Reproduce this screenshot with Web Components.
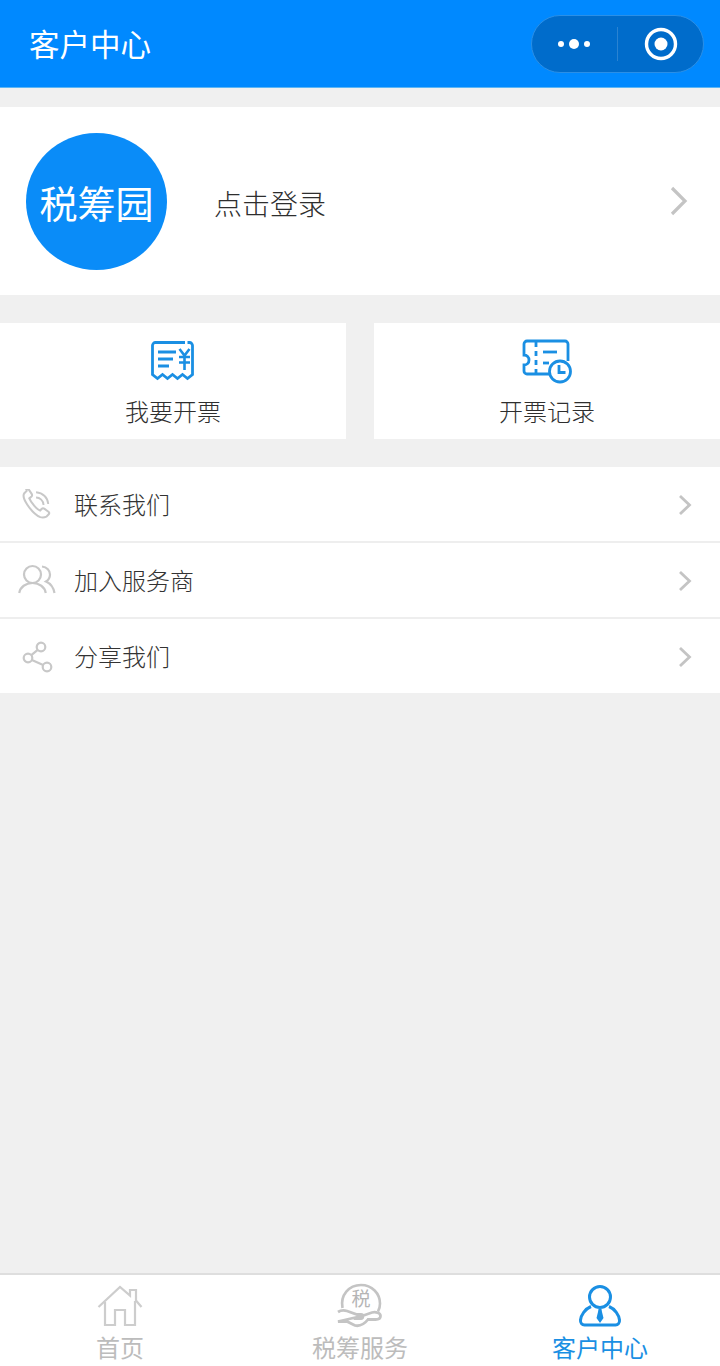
<!DOCTYPE html>
<html lang="zh">
<head>
<meta charset="utf-8">
<title>客户中心</title>
<style>
  html, body { margin: 0; padding: 0; background: #f0f0f0; }
  body {
    width: 720px;
    height: 1366px;
    overflow: hidden;
    display: flex;
    flex-direction: column;
    font-family: "Noto Sans CJK SC", "Noto Sans", sans-serif;
  }
  main { flex: 1; min-height: 0; }
</style>
</head>
<body>
<app-header title="客户中心"></app-header>
<main>
  <profile-card label="点击登录"></profile-card>
  <action-row>
    <action-card label="我要开票" icon="invoice"></action-card>
    <action-card label="开票记录" icon="record"></action-card>
  </action-row>
  <menu-list>
    <menu-item label="联系我们" icon="phone"></menu-item>
    <menu-item label="加入服务商" icon="people"></menu-item>
    <menu-item label="分享我们" icon="share"></menu-item>
  </menu-list>
</main>
<tab-bar>
  <tab-item label="首页" icon="home"></tab-item>
  <tab-item label="税筹服务" icon="tax"></tab-item>
  <tab-item label="客户中心" icon="user" active></tab-item>
</tab-bar>

<script>
const ICONS = {
  invoice: `<svg width="46" height="42" viewBox="0 0 46 42" fill="none" stroke="#1a8fe3" stroke-width="2.800">
    <path d="M35 2.500H5.500a3 3 0 0 0-3 3v29l5 4 5-4 5 4 5-4 5 4 5-4 5 4 5-4v-29a3 3 0 0 0-3-3h-2"/>
    <path d="M8 12h18M8 19h15M8 26h11"/>
    <path d="M29.500 9l5 6.500 5-6.500M29 17h11M29 22.500h11M34.500 15v15" stroke-width="2.600"/>
  </svg>`,
  record: `<svg width="50" height="46" viewBox="0 0 50 46" fill="none" stroke="#1a8fe3" stroke-width="2.800">
    <path d="M28 36H5a3 3 0 0 1-3-3v-6c3 0 5-2 5-5s-2-5-5-5V6a3 3 0 0 1 3-3h38a3 3 0 0 1 3 3v17"/>
    <path d="M14 4v5M14 13v5M14 22v5M14 31v4"/>
    <path d="M21 14h14"/>
    <path d="M21 25h6"/>
    <circle cx="38" cy="33.500" r="10.500" fill="#fff"/>
    <path d="M37 27v7.500h6.500"/>
  </svg>`,
  phone: `<svg width="30" height="30" viewBox="0 0 32 32" fill="none" stroke="#c8c8c8" stroke-width="2.200">
    <path d="M5 2L2.500 4.500c-1.500 2 -1 6 3 12s9 11.500 14 13.500c3 1 4.500 .5 6.500 -.5l2.500 -2.500c.8 -1 .6 -2 -.3 -2.800l-4.500 -3.200c-1 -.7 -2 -.5 -2.800 .3l-1.600 1.700c-3 -1 -9.500 -8 -11.500 -13l2.300 -2c.8 -.8 .8 -1.800 .2 -2.800l-3 -4.500c-.8 -1 -2 -1.200 -2.800 -.7z"/>
    <path d="M15 9c4 0 8 3.500 8 8M15 3.500c7.500 .5 12.500 6 13 12.500" stroke-width="2"/>
  </svg>`,
  people: `<svg width="38" height="32" viewBox="0 0 38 32" fill="none" stroke="#c8c8c8" stroke-width="2.200">
    <circle cx="14.500" cy="10.500" r="8.500"/>
    <path d="M1.200 29c1 -6 6.500 -10 13.300 -10s12.300 4 13.300 10"/>
    <path d="M24 2.500c5 .5 8 4 8 8c0 3 -1.500 5.500 -4 7c4.500 2 7.500 6 8.500 11.500"/>
  </svg>`,
  share: `<svg width="32" height="34" viewBox="0 0 32 34" fill="none" stroke="#c8c8c8" stroke-width="2.200">
    <circle cx="20" cy="8" r="4.300"/>
    <circle cx="7" cy="19" r="4.300"/>
    <circle cx="26" cy="28" r="4.300"/>
    <path d="M16.700 10.800L10.300 16.200M10.900 20.900l11.200 5.200"/>
  </svg>`,
  home: `<svg width="46" height="42" viewBox="0 0 46 42" fill="none" stroke="#cdcdcd" stroke-width="2.200">
    <path d="M1.500 22L23 2l10 8.500V5h6v10.500L44.500 22"/>
    <path d="M8 17v23h10V25h10v15h10V16"/>
  </svg>`,
  tax: `<svg width="48" height="46" viewBox="0 0 48 46" fill="none" stroke="#c4c4c4" stroke-width="2.600">
    <path d="M6.500 25C4 12 13 2 25 2c11 0 19 8.500 19 18.500c0 3 -.5 5.500 -2 8"/>
    <path d="M2 29c3 -2 6 -2 9 -1l10 3.500h4c2.500 0 2.500 4 0 4h-7M26 33l10 -3.500c4 -1 8.500 .5 8.500 3.500s-2.500 3.500 -5 3.500H32c-4 5 -8 7 -13 6l-8 -4H2z" stroke-width="2.800"/>
    <text x="25" y="23" text-anchor="middle" font-size="19" stroke="none" fill="#b5b5b5" font-family="'Noto Sans CJK SC', sans-serif">税</text>
  </svg>`,
  user: `<svg width="44" height="44" viewBox="0 0 44 44" fill="none" stroke="#1a8fe3" stroke-width="3">
    <circle cx="22" cy="13" r="10.500"/>
    <path d="M13 22.500C7 25 3 31 2.500 36c-.3 3 1.500 5 4 5h31c2.500 0 4.300 -2 4 -5C41 31 37 25 31 22.500"/>
    <path d="M20.500 25h3l.5 3 1.500 6-3.500 5-3.500-5 1.500-6z" fill="#1a8fe3" stroke="none"/>
  </svg>`,
};

class AppHeader extends HTMLElement {
  constructor() {
    super();
    this.attachShadow({ mode: 'open' });
  }

  connectedCallback() {
    this.shadowRoot.innerHTML = `
      <style>
        :host {
          display: flex;
          flex: none;
          align-items: center;
          justify-content: space-between;
          box-sizing: border-box;
          height: 88px;
          padding: 1px 16px 0 29px;
          background: #0089ff;
          border-bottom: 1px solid #5cb6f5;
          color: #fff;
        }
        .title { font-size: 30.500px; line-height: 40px; margin-top: -2px; }
        .capsule {
          display: flex;
          align-items: center;
          box-sizing: border-box;
          width: 173px;
          height: 58px;
          border-radius: 29px;
          background: #006ccb;
          border: 1px solid #2b8fe6;
        }
        .dots {
          flex: 1;
          display: flex;
          justify-content: center;
          align-items: center;
          gap: 5px;
          margin-right: 1px;
        }
        .dots i { display: block; width: 6px; height: 6px; border-radius: 50%; background: #fff; }
        .dots i:nth-child(2) { width: 10px; height: 10px; }
        .sep { width: 1px; height: 34px; background: #2a83d2; }
        .target { flex: 1; display: flex; justify-content: center; padding-left: 2px; }
      </style>
      <div class="title">${this.getAttribute('title')}</div>
      <div class="capsule">
        <div class="dots"><i></i><i></i><i></i></div>
        <div class="sep"></div>
        <div class="target">
          <svg width="34" height="34" viewBox="0 0 34 34">
            <circle cx="17" cy="17" r="14.500" fill="none" stroke="#fff" stroke-width="3.400"/>
            <circle cx="17" cy="17" r="6.500" fill="#fff"/>
          </svg>
        </div>
      </div>
    `;
  }
}

class ProfileCard extends HTMLElement {
  constructor() {
    super();
    this.attachShadow({ mode: 'open' });
  }

  connectedCallback() {
    this.shadowRoot.innerHTML = `
      <style>
        :host {
          display: flex;
          align-items: center;
          box-sizing: border-box;
          height: 188px;
          margin-top: 19px;
          padding: 0 32px 0 26px;
          background: #fff;
        }
        .logo {
          width: 141px;
          height: 137px;
          border-radius: 50%;
          background: #0a8cf8;
          color: #fff;
          display: flex;
          align-items: center;
          justify-content: center;
          font-size: 38px;
          white-space: nowrap;
        }
        .label {
          flex: 1;
          margin-left: 47px;
          margin-top: 4px;
          font-size: 28px;
          font-weight: 300;
          color: #2e2e2e;
        }
      </style>
      <div class="logo">税筹园</div>
      <div class="label">${this.getAttribute('label')}</div>
      <svg width="18" height="30" viewBox="0 0 18 30" fill="none" stroke="#c4c4c4" stroke-width="3.200">
        <path d="M2 2l13 13L2 28"/>
      </svg>
    `;
  }
}

class ActionRow extends HTMLElement {
  constructor() {
    super();
    this.attachShadow({ mode: 'open' });
    this.shadowRoot.innerHTML = `
      <style>
        :host {
          display: grid;
          grid-template-columns: 346px 346px;
          column-gap: 28px;
          margin-top: 28px;
        }
      </style>
      <slot></slot>
    `;
  }
}

class ActionCard extends HTMLElement {
  constructor() {
    super();
    this.attachShadow({ mode: 'open' });
  }

  connectedCallback() {
    this.shadowRoot.innerHTML = `
      <style>
        :host {
          display: flex;
          flex-direction: column;
          align-items: center;
          box-sizing: border-box;
          height: 116px;
          padding-top: 15px;
          background: #fff;
        }
        .icon { height: 46px; display: flex; align-items: center; }
        .label { margin-top: 11px; font-size: 24px; font-weight: 300; line-height: 32px; color: #2e2e2e; }
      </style>
      <div class="icon">${ICONS[this.getAttribute('icon')]}</div>
      <div class="label">${this.getAttribute('label')}</div>
    `;
  }
}

class MenuList extends HTMLElement {
  constructor() {
    super();
    this.attachShadow({ mode: 'open' });
    this.shadowRoot.innerHTML = `
      <style>
        :host { display: block; margin-top: 28px; }
      </style>
      <slot></slot>
    `;
  }
}

class MenuItem extends HTMLElement {
  constructor() {
    super();
    this.attachShadow({ mode: 'open' });
  }

  connectedCallback() {
    this.shadowRoot.innerHTML = `
      <style>
        :host {
          display: flex;
          align-items: center;
          box-sizing: border-box;
          height: 76px;
          padding: 0 28px 0 18px;
          background: #fff;
          border-bottom: 2px solid #eeeeee;
        }
        :host(:last-child) { height: 74px; border-bottom: 0; }
        .icon { width: 38px; display: flex; justify-content: center; }
        .label { flex: 1; margin-left: 18px; margin-top: -1px; font-size: 24px; font-weight: 300; color: #333; }
        .chev { margin-top: 1px; }
      </style>
      <div class="icon">${ICONS[this.getAttribute('icon')]}</div>
      <div class="label">${this.getAttribute('label')}</div>
      <svg class="chev" width="14" height="22" viewBox="0 0 14 22" fill="none" stroke="#c4c4c4" stroke-width="2.800">
        <path d="M2 2l9.500 9L2 20"/>
      </svg>
    `;
  }
}

class TabBar extends HTMLElement {
  constructor() {
    super();
    this.attachShadow({ mode: 'open' });
    this.shadowRoot.innerHTML = `
      <style>
        :host {
          display: grid;
          grid-template-columns: repeat(3, 240px);
          flex: none;
          box-sizing: border-box;
          height: 93px;
          background: #fff;
          border-top: 2px solid #dedede;
        }
      </style>
      <slot></slot>
    `;
  }
}

class TabItem extends HTMLElement {
  constructor() {
    super();
    this.attachShadow({ mode: 'open' });
  }

  connectedCallback() {
    this.shadowRoot.innerHTML = `
      <style>
        :host {
          display: flex;
          flex-direction: column;
          align-items: center;
          color: #bcbcbc;
        }
        :host([active]) { color: #1a8fe3; }
        .icon { height: 46px; margin-top: 8px; display: flex; align-items: center; }
        .label { font-size: 24px; line-height: 30px; margin-top: 3px; }
      </style>
      <div class="icon">${ICONS[this.getAttribute('icon')]}</div>
      <div class="label">${this.getAttribute('label')}</div>
    `;
  }
}

customElements.define('app-header', AppHeader);
customElements.define('profile-card', ProfileCard);
customElements.define('action-row', ActionRow);
customElements.define('action-card', ActionCard);
customElements.define('menu-list', MenuList);
customElements.define('menu-item', MenuItem);
customElements.define('tab-bar', TabBar);
customElements.define('tab-item', TabItem);
</script>
</body>
</html>
